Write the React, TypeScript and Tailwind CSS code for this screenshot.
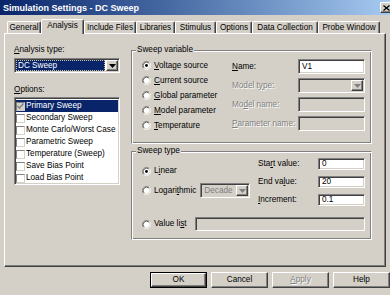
import React from "react";

const raised =
  "border border-t-white border-l-white border-r-[#404040] border-b-[#404040] shadow-[inset_-1px_-1px_0_#808080]";
const sunken =
  "border border-t-[#808080] border-l-[#808080] border-r-white border-b-white shadow-[inset_1px_1px_0_#404040,inset_-1px_-1px_0_#d4d0c8]";
const etched =
  "border border-t-[#808080] border-l-[#808080] border-r-white border-b-white shadow-[inset_1px_1px_0_#fff,inset_-1px_-1px_0_#808080]";
const disabledText = "text-[#808080] [text-shadow:1px_1px_0_#fff]";

const TABS = [
  { label: "General", w: "w-[34px]" },
  { label: "Analysis", w: "w-[43px]", active: true },
  { label: "Include Files", w: "w-[52px]" },
  { label: "Libraries", w: "w-[39px]" },
  { label: "Stimulus", w: "w-[41px]" },
  { label: "Options", w: "w-[36px]" },
  { label: "Data Collection", w: "w-[66px]" },
  { label: "Probe Window", w: "w-[62px]" },
];

const OPTIONS = [
  "Primary Sweep",
  "Secondary Sweep",
  "Monte Carlo/Worst Case",
  "Parametric Sweep",
  "Temperature (Sweep)",
  "Save Bias Point",
  "Load Bias Point",
];

function Radio({ checked = false }: { checked?: boolean }) {
  return (
    <svg width="9" height="9" viewBox="0 0 12 12" className="shrink-0">
      <circle cx="6" cy="6" r="4.5" fill="#fff" />
      <path d="M2.11 9.89A5.5 5.5 0 0 1 9.89 2.11" fill="none" stroke="#808080" />
      <path d="M9.89 2.11A5.5 5.5 0 0 1 2.11 9.89" fill="none" stroke="#fff" />
      <path d="M2.82 9.18A4.5 4.5 0 0 1 9.18 2.82" fill="none" stroke="#404040" />
      <path d="M9.18 2.82A4.5 4.5 0 0 1 2.82 9.18" fill="none" stroke="#d4d0c8" />
      {checked && <circle cx="6" cy="6" r="1.9" fill="#000" />}
    </svg>
  );
}

function Arrow({ color = "#000" }: { color?: string }) {
  return (
    <svg width="7" height="4" viewBox="0 0 7 4">
      <path d="M0 0h7L3.5 4z" fill={color} />
    </svg>
  );
}

function DropButton({ disabled = false }: { disabled?: boolean }) {
  return (
    <div className={`w-[12px] h-full shrink-0 bg-[#d4d0c8] flex items-center justify-center ${raised}`}>
      <Arrow color={disabled ? "#808080" : "#000"} />
    </div>
  );
}

function RadioRow({
  label,
  checked,
  className = "",
}: {
  label: React.ReactNode;
  checked?: boolean;
  className?: string;
}) {
  return (
    <div className={`flex items-center gap-[3px] whitespace-nowrap ${className}`}>
      <Radio checked={checked} />
      <span>{label}</span>
    </div>
  );
}

function Field({ value = "", className = "", disabled = false }: { value?: string; className?: string; disabled?: boolean }) {
  return (
    <div
      className={`${sunken} ${disabled ? "bg-[#d4d0c8]" : "bg-white"} flex items-center pl-[3px] ${className}`}
    >
      {value}
    </div>
  );
}

function Check({ checked = false, disabled = false }: { checked?: boolean; disabled?: boolean }) {
  return (
    <div
      className={`w-[9px] h-[9px] shrink-0 border border-t-[#808080] border-l-[#808080] border-r-[#d4d0c8] border-b-[#d4d0c8] ${
        disabled ? "bg-[#d4d0c8]" : "bg-white"
      } flex items-center justify-center`}
    >
      {checked && (
        <svg width="7" height="7" viewBox="0 0 7 7">
          <path d="M0.5 3l2 2 4-4.5" fill="none" stroke="#808080" strokeWidth="1.4" />
        </svg>
      )}
    </div>
  );
}

function Legend({ children }: { children: React.ReactNode }) {
  return <legend className="ml-[4px] px-[1px] bg-[#d4d0c8] leading-[10px]">{children}</legend>;
}

export default function App() {
  return (
    <div className="w-[390px] h-[295px] overflow-hidden bg-[#d4d0c8] font-['Liberation_Sans',Arial,sans-serif] text-[8.2px] leading-[10px] text-black select-none">
      {/* title bar */}
      <div className="h-[15px] flex items-center bg-linear-to-r from-[#0a246a] to-[#a6caf0]">
        <span className="pl-[3px] text-[9px] font-bold text-white">Simulation Settings - DC Sweep</span>
        <div className={`ml-auto -mr-[6px] w-[16px] h-[11px] shrink-0 bg-[#d4d0c8] ${raised} flex items-center pl-[2px]`}>
          <svg width="7" height="6" viewBox="0 0 7 6">
            <path d="M0.5 0.5l6 5M6.5 0.5l-6 5" stroke="#000" strokeWidth="1.3" />
          </svg>
        </div>
      </div>

      {/* tabs */}
      <div className="mt-[4px] h-[14px] flex items-end pl-[7px]">
        {TABS.map((t) => (
          <div
            key={t.label}
            className={`${t.w} shrink-0 border-t border-l border-t-white border-l-white border-r border-r-[#404040] rounded-t-[2px] shadow-[inset_-1px_0_0_#808080] flex items-center justify-center whitespace-nowrap ${
              t.active ? "h-[15px] -mb-[1px] relative z-10 bg-[#d4d0c8] pb-[2px]" : "h-[12px]"
            }`}
          >
            {t.label}
          </div>
        ))}
      </div>

      {/* panel */}
      <div className="mx-[4px] h-[234px] border border-t-white border-l-white border-r-[#404040] border-b-[#404040] shadow-[inset_-1px_-1px_0_#808080] flex pl-[9px] pt-[11px]">
        {/* left column */}
        <div className="w-[106px] flex flex-col">
          <div className="h-[10px]">
            <u>A</u>nalysis type:
          </div>
          <div className={`mt-[3px] h-[15px] ${sunken} bg-white flex p-[1px]`}>
            <div className="flex-1 mr-[1px] bg-[#0a246a] text-white border border-dotted border-[#c8c4a0] flex items-center pl-[1px]">
              DC Sweep
            </div>
            <DropButton />
          </div>
          <div className="mt-[12px] h-[10px]">
            <u>O</u>ptions:
          </div>
          <div className={`mt-[2px] h-[88px] ${sunken} bg-white pt-[2px] px-[1px]`}>
            {OPTIONS.map((o, i) => (
              <div
                key={o}
                className={`h-[12px] flex items-center whitespace-nowrap ${i === 0 ? "bg-[#0a246a] text-white" : ""}`}
              >
                <Check checked={i === 0} disabled={i === 0} />
                <span className="ml-[1px]">{o}</span>
              </div>
            ))}
          </div>
        </div>

        {/* right column */}
        <div className="ml-[11px] w-[241px] flex flex-col">
          <fieldset className={`h-[99px] ${etched}`}>
            <Legend>Sweep variable</Legend>
            <div className="flex pt-[3px] pl-[10px]">
              <div className="w-[90px] flex flex-col">
                <RadioRow className="h-[15px]" checked label={<><u>V</u>oltage source</>} />
                <RadioRow className="h-[15px]" label={<><u>C</u>urrent source</>} />
                <RadioRow className="h-[15px]" label={<><u>G</u>lobal parameter</>} />
                <RadioRow className="h-[15px]" label={<><u>M</u>odel parameter</>} />
                <RadioRow className="h-[15px]" label={<><u>T</u>emperature</>} />
              </div>
              <div className="mt-[1px] grid grid-cols-[66px_67px] gap-y-[4px] auto-rows-[15px]">
                <div className="flex items-center">
                  <u>N</u>ame:
                </div>
                <Field value="V1" />
                <div className={`flex items-center ${disabledText}`}>
                  Model t<u>y</u>pe:
                </div>
                <div className={`${sunken} bg-[#d4d0c8] flex justify-end p-[1px]`}>
                  <DropButton disabled />
                </div>
                <div className={`flex items-center ${disabledText}`}>
                  Mo<u>d</u>el name:
                </div>
                <Field disabled />
                <div className={`flex items-center whitespace-nowrap ${disabledText}`}>
                  <u>P</u>arameter name:
                </div>
                <Field disabled />
              </div>
            </div>
          </fieldset>

          <fieldset className={`mt-[2px] h-[94px] ${etched}`}>
            <Legend>Sweep type</Legend>
            <div className="flex">
              <div className="w-[126px] pl-[10px] flex flex-col">
                <RadioRow className="mt-[8px] h-[14px]" checked label={<>L<u>i</u>near</>} />
                <div className="mt-[5px] h-[15px] flex items-center">
                  <RadioRow label={<>Logari<u>t</u>hmic</>} />
                  <div className={`ml-[4px] w-[50px] h-[15px] ${sunken} bg-[#d4d0c8] flex p-[1px]`}>
                    <div className="flex-1 flex items-center pl-[2px] text-[#808080]">Decade</div>
                    <DropButton disabled />
                  </div>
                </div>
              </div>
              <div className="pt-[2px] grid grid-cols-[60px_47px] gap-y-[6px] auto-rows-[12px]">
                <div className="flex items-center">
                  Sta<u>r</u>t value:
                </div>
                <Field value="0" />
                <div className="flex items-center">
                  End va<u>l</u>ue:
                </div>
                <Field value="20" />
                <div className="flex items-center">
                  <u>I</u>ncrement:
                </div>
                <Field value="0.1" />
              </div>
            </div>
            <div className="mt-[11px] flex items-center pl-[10px] pr-[6px]">
              <RadioRow label={<>Value li<u>s</u>t</>} />
              <Field disabled className="ml-auto w-[170px] h-[14px]" />
            </div>
          </fieldset>
        </div>
      </div>

      {/* buttons */}
      <div className="mt-[5px] flex justify-end gap-[4px]">
        <div className="w-[57px] h-[16px] border border-black">
          <div className={`w-full h-full ${raised} flex items-center justify-center`}>OK</div>
        </div>
        <div className={`w-[57px] h-[16px] ${raised} flex items-center justify-center`}>Cancel</div>
        <div className={`w-[57px] h-[16px] ${raised} flex items-center justify-center ${disabledText}`}>
          <u>A</u>pply
        </div>
        <div className={`w-[57px] h-[16px] ${raised} flex items-center justify-center`}>Help</div>
      </div>
    </div>
  );
}
